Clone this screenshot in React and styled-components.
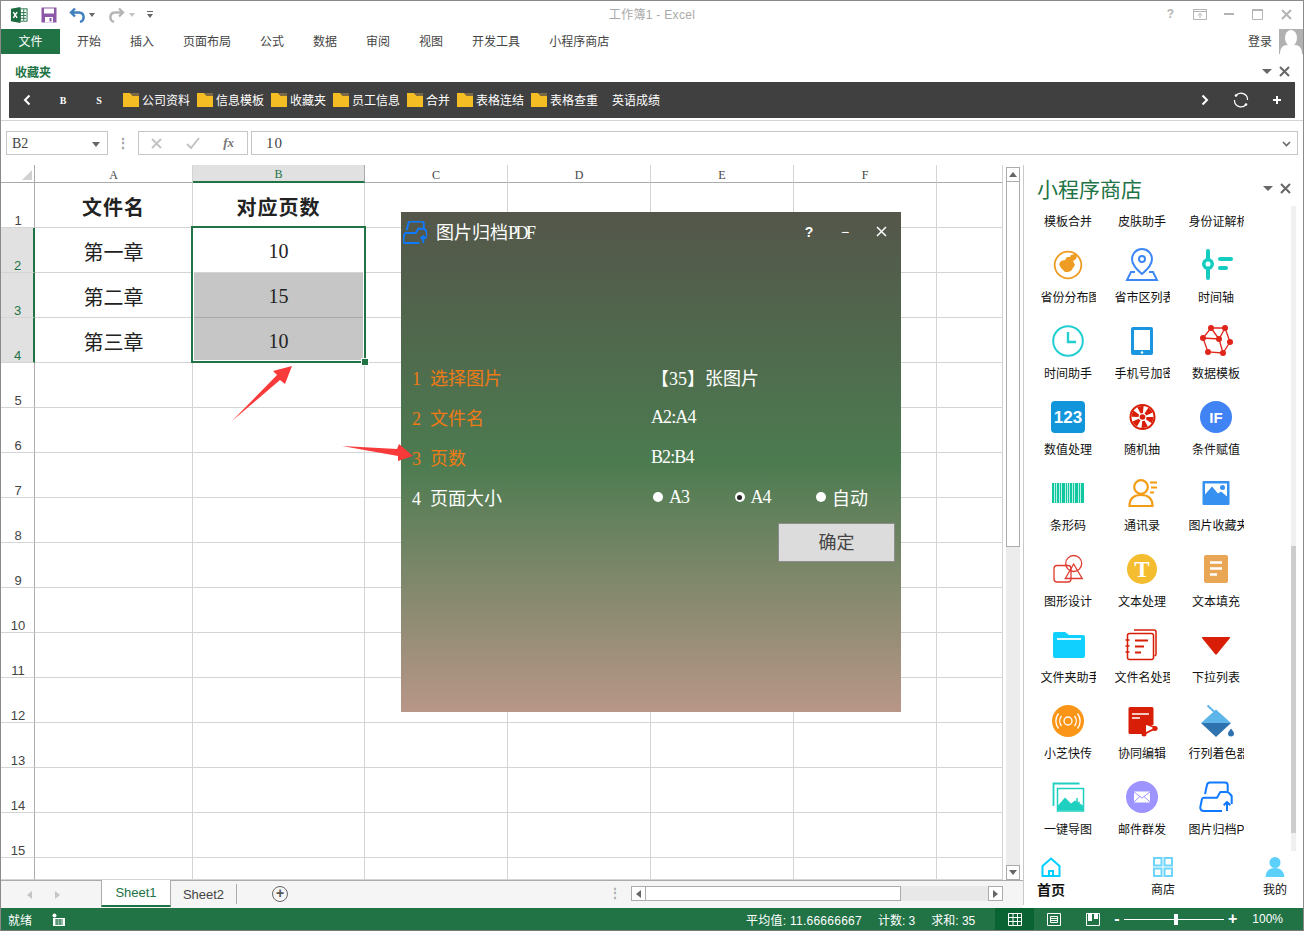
import React from 'react';
import styled, { createGlobalStyle } from 'styled-components';

const SANS = '"Liberation Sans", "Noto Sans CJK SC", sans-serif';
const SERIF = '"Liberation Serif", "Noto Sans CJK SC", serif';
const GREEN = '#217346';

const GlobalStyle = createGlobalStyle`
  html, body { margin: 0; padding: 0; background: #fff; }
  * { box-sizing: border-box; }
`;

const Window = styled.div`
  width: 1304px;
  height: 931px;
  display: flex;
  flex-direction: column;
  overflow: hidden;
  border: 1px solid #8a8a8a;
  border-bottom-color: #7a7a7a;
  font-family: ${SANS};
  font-size: 12px;
  color: #444;
  background: #fff;
`;

/* title bar */
const TitleBar = styled.div`
  height: 28px;
  display: grid;
  grid-template-columns: 1fr auto 1fr;
  align-items: center;
`;
const QuickAccess = styled.div`
  display: flex;
  align-items: center;
  padding: 0 0 1px 9px;
`;
const TitleText = styled.div`
  color: #a9a9a9;
  font-size: 12px;
  letter-spacing: 0.3px;
  padding-bottom: 3px;
`;
const WindowButtons = styled.div`
  display: flex;
  justify-content: flex-end;
  padding: 0 2px 2px 0;
`;
const WindowButton = styled.div`
  width: 29px;
  height: 20px;
  display: flex;
  align-items: center;
  justify-content: center;
  color: #b4b4b4;
  font-weight: bold;
`;

/* ribbon tabs */
const RibbonTabs = styled.div`
  height: 25px;
  display: flex;
  align-items: center;
`;
const FileTab = styled.div`
  width: 59px;
  height: 25px;
  padding-bottom: 2px;
  background: ${GREEN};
  color: #fff;
  display: flex;
  align-items: center;
  justify-content: center;
  margin-right: 17px;
`;
const TabList = styled.div`
  display: flex;
  gap: 29px;
  flex: 1;
  padding-bottom: 3px;
`;
const LoginArea = styled.div`
  display: flex;
  align-items: center;
  gap: 7px;
`;
const LoginText = styled.span`
  padding-bottom: 3px;
`;
const Avatar = styled.div`
  width: 24px;
  height: 25px;
  background: #b1b1b1;
  overflow: hidden;
`;

/* favourites group */
const FavGroup = styled.div`
  height: 67px;
  border-bottom: 1px solid #d4d4d4;
  padding: 0 8px;
`;
const FavHeader = styled.div`
  height: 28px;
  padding: 6px 0 0 6px;
  display: flex;
  align-items: center;
  color: ${GREEN};
  font-weight: bold;
`;
const HeaderTools = styled.div`
  margin-left: auto;
  display: flex;
  align-items: center;
  gap: 7px;
  padding-right: ${p => p.$pad}px;
`;
const DownTriangle = styled.span`
  width: 0;
  height: 0;
  border-left: 5px solid transparent;
  border-right: 5px solid transparent;
  border-top: 5px solid #666;
`;
const FolderBar = styled.div`
  height: 36px;
  background: #404040;
  color: #fff;
  display: flex;
  align-items: center;
`;
const BarButton = styled.div`
  width: 36px;
  height: 36px;
  display: flex;
  align-items: center;
  justify-content: center;
  flex: none;
  font-family: ${SERIF};
  font-size: 10px;
  font-weight: bold;
`;
const BarSpacer = styled.div`
  flex: 1;
`;
const FolderItem = styled.div`
  display: flex;
  align-items: center;
  gap: 3px;
  padding-bottom: 1px;
  margin-left: ${p => p.$gap}px;
`;

/* formula bar */
const FormulaRow = styled.div`
  height: 44px;
  padding: 10px 5px 10px 5px;
  display: flex;
  align-items: stretch;
`;
const InputBox = styled.div`
  border: 1px solid #c6c6c6;
  display: flex;
  align-items: center;
  background: #fff;
`;
const NameBox = styled(InputBox)`
  width: 102px;
  padding: 2px 7px 0 5px;
  justify-content: space-between;
  font-family: ${SERIF};
  font-size: 14px;
  color: #444;
`;
const Grip = styled.div`
  width: 30px;
  display: flex;
  align-items: center;
  justify-content: center;
  color: #9a9a9a;
  font-weight: bold;
  font-size: 12px;
  line-height: 4px;
`;
const FxBox = styled(InputBox)`
  width: 110px;
  margin-right: 3px;
  padding: 0 13px 0 12px;
  justify-content: space-between;
`;
const FxLabel = styled.span`
  font-family: ${SERIF};
  font-style: italic;
  font-weight: bold;
  font-size: 13px;
  color: #777;
`;
const FormulaInput = styled(InputBox)`
  flex: 1;
  padding: 1px 6px 0 14px;
  justify-content: space-between;
  font-family: ${SERIF};
  font-size: 15px;
  letter-spacing: 1px;
  color: #444;
`;

/* main area */
const Main = styled.div`
  height: 743px;
  display: flex;
`;
const LeftColumn = styled.div`
  width: 1022px;
  display: flex;
  flex-direction: column;
`;
const SheetRow = styled.div`
  height: 715px;
  display: flex;
`;
const GridWrap = styled.div`
  position: relative;
  width: 1002px;
  height: 715px;
`;
const SheetGrid = styled.div`
  display: grid;
  grid-template-columns: 34px 158px 172px 143px 143px 143px 143px 66px;
  grid-template-rows: 18px repeat(15, 45px) 22px;
`;
const ColHead = styled.div`
  display: flex;
  align-items: center;
  justify-content: center;
  font-family: ${SERIF};
  font-size: 12px;
  padding-top: 3px;
  background: ${p => (p.$on ? '#e1e1e1' : '#fff')};
  color: ${p => (p.$on ? GREEN : '#444')};
  border-bottom: ${p => (p.$on ? `2px solid ${GREEN}` : '1px solid #ababab')};
  border-right: 1px solid ${p => (p.$on ? '#ababab' : '#d4d4d4')};
`;
const Corner = styled.div`
  border-right: 1px solid #ababab;
  border-bottom: 1px solid #ababab;
  display: flex;
  align-items: flex-end;
  justify-content: flex-end;
  padding: 0 2px 2px 0;
`;
const CornerMark = styled.div`
  width: 0;
  height: 0;
  border-left: 10px solid transparent;
  border-bottom: 10px solid #d2d2d2;
`;
const RowHead = styled.div`
  display: flex;
  align-items: flex-end;
  justify-content: center;
  line-height: 13px;
  padding-left: 1px;
  font-size: 13px;
  background: ${p => (p.$on ? '#e1e1e1' : '#fff')};
  color: ${p => (p.$on ? GREEN : '#444')};
  border-bottom: 1px solid #d4d4d4;
  border-right: ${p => (p.$on ? `2px solid ${GREEN}` : '1px solid #ababab')};
`;
const Cell = styled.div`
  display: flex;
  align-items: center;
  justify-content: center;
  padding-top: 2px;
  border-right: 1px solid #d4d4d4;
  border-bottom: 1px solid ${p => (p.$fill ? '#a9a9a9' : '#d4d4d4')};
  background: ${p => (p.$fill ? '#c6c6c6' : '#fff')};
  color: #222;
  font-family: ${SERIF};
  font-size: 20px;
  font-weight: ${p => (p.$bold ? 'bold' : 'normal')};
  letter-spacing: ${p => (p.$bold ? '1px' : '0')};
`;
const Selection = styled.div`
  position: absolute;
  left: 190px;
  top: 61px;
  width: 175px;
  height: 137px;
  border: 2px solid ${GREEN};
  box-shadow: inset 0 0 0 1px #fff;
`;
const FillHandle = styled.div`
  position: absolute;
  right: -4px;
  bottom: -4px;
  width: 6px;
  height: 6px;
  background: ${GREEN};
  outline: 1px solid #fff;
`;

const VScroll = styled.div`
  width: 20px;
  padding: 2px 3px 0 3px;
  display: flex;
  flex-direction: column;
`;
const ScrollButton = styled.div`
  flex: none;
  width: ${p => (p.$w ? `${p.$w}px` : '100%')};
  height: ${p => (p.$h ? `${p.$h}px` : '100%')};
  background: #fff;
  border: 1px solid #ababab;
  display: flex;
  align-items: center;
  justify-content: center;
`;
const VThumb = styled.div`
  height: 366px;
  background: #fff;
  border: 1px solid #ababab;
  margin-top: -1px;
`;
const VTrack = styled.div`
  flex: 1;
  background: #ececec;
`;
const Arrow = styled.span`
  width: 0;
  height: 0;
  ${p => p.$dir === 'up' && 'border-left:4px solid transparent;border-right:4px solid transparent;border-bottom:5px solid #666;'}
  ${p => p.$dir === 'down' && 'border-left:4px solid transparent;border-right:4px solid transparent;border-top:5px solid #666;'}
  ${p => p.$dir === 'left' && `border-top:4px solid transparent;border-bottom:4px solid transparent;border-right:5px solid ${p.$c || '#666'};`}
  ${p => p.$dir === 'right' && `border-top:4px solid transparent;border-bottom:4px solid transparent;border-left:5px solid ${p.$c || '#666'};`}
`;

/* sheet tabs */
const SheetTabs = styled.div`
  height: 28px;
  background: #f5f5f5;
  border-top: 1px solid #ababab;
  display: flex;
  align-items: stretch;
`;
const TabNav = styled.div`
  width: 100px;
  padding-left: 26px;
  display: flex;
  align-items: center;
  gap: 23px;
`;
const SheetTab = styled.div`
  width: ${p => p.$w}px;
  height: ${p => (p.$on ? '27px' : '26px')};
  margin-top: ${p => (p.$on ? '-1px' : '0')};
  display: flex;
  align-items: center;
  justify-content: center;
  font-size: 13px;
  color: ${p => (p.$on ? GREEN : '#444')};
  background: ${p => (p.$on ? '#fff' : 'transparent')};
  border-left: ${p => (p.$on ? '1px solid #ababab' : '0')};
  border-right: ${p => (p.$on ? '1px solid #ababab' : '0')};
  border-bottom: ${p => (p.$on ? `2px solid ${GREEN}` : '0')};
`;
const TabDivider = styled.div`
  width: 1px;
  height: 20px;
  margin-top: 3px;
  background: #ababab;
`;
const AddSheet = styled.div`
  width: 16px;
  height: 16px;
  margin: 5px 0 0 35px;
  border: 1px solid #666;
  border-radius: 50%;
  color: #555;
  font-size: 14px;
  font-weight: bold;
  line-height: 13px;
  text-align: center;
`;
const TabGrip = styled.div`
  margin-left: 321px;
  width: 22px;
  color: #aaa;
  font-weight: bold;
  line-height: 25px;
`;
const HScroll = styled.div`
  width: 372px;
  height: 15px;
  margin-top: 5px;
  background: #e8e8e8;
  display: flex;
`;
const HThumb = styled.div`
  width: 256px;
  height: 15px;
  margin-left: -1px;
  background: #fff;
  border: 1px solid #ababab;
`;
const HSpacer = styled.div`
  flex: 1;
`;

/* side panel */
const SidePanel = styled.aside`
  width: 280px;
  border-left: 1px solid #c9c9c9;
  display: flex;
  flex-direction: column;
  height: 740px;
`;
const PanelHead = styled.div`
  height: 41px;
  padding: 5px 9px 0 13px;
  display: flex;
  align-items: center;
  color: ${GREEN};
  font-size: 21px;
`;
const PanelBody = styled.div`
  height: 645px;
  display: flex;
`;
const AppGrid = styled.div`
  width: 267px;
  padding: 5px 0 0 7px;
  display: grid;
  grid-template-columns: repeat(3, 74px);
  grid-auto-rows: min-content;
  overflow: hidden;
`;
const AppCell = styled.div`
  height: ${p => (p.$flat ? '32px' : '76px')};
  display: flex;
  flex-direction: column;
  align-items: center;
`;
const AppIcon = styled.div`
  width: 44px;
  height: 44px;
  flex: none;
`;
const AppLabel = styled.div`
  width: 55px;
  height: 20px;
  line-height: 22px;
  text-align: center;
  white-space: nowrap;
  overflow: hidden;
  color: #111;
`;
const PanelTrack = styled.div`
  width: 5px;
  background: #f0f0f0;
  display: flex;
  flex-direction: column;
`;
const PanelThumb = styled.div`
  margin-top: 340px;
  height: 287px;
  background: #cdcdcd;
`;
const BottomNav = styled.nav`
  flex: 1;
  padding: 6px 14px 0 13px;
  display: flex;
  justify-content: space-between;
`;
const NavItem = styled.div`
  width: 28px;
  display: flex;
  flex-direction: column;
  align-items: center;
  gap: 3px;
  color: #111;
  font-size: ${p => (p.$on ? '14px' : '12px')};
  font-weight: ${p => (p.$on ? 'bold' : 'normal')};
  line-height: 20px;
  white-space: nowrap;
`;

/* status bar */
const StatusBar = styled.div`
  height: 22px;
  background: ${GREEN};
  color: #fff;
  display: flex;
  align-items: center;
  padding: 0 20px 0 7px;
`;
const StatusStats = styled.div`
  margin-left: auto;
  display: flex;
  gap: 16px;
  margin-right: 20px;
`;
const StatWide = styled.span`
  letter-spacing: 0.25px;
`;
const ViewButton = styled.div`
  width: 39px;
  height: 22px;
  display: flex;
  align-items: center;
  justify-content: center;
  background: ${p => (p.$on ? '#0a6332' : 'transparent')};
`;
const Zoomer = styled.div`
  margin-left: 2px;
  width: 127px;
  padding-right: 4px;
  display: flex;
  align-items: center;
  gap: 4px;
  font-size: 16px;
  font-weight: bold;
`;
const ZoomTrack = styled.div`
  position: relative;
  flex: 1;
  height: 1px;
  background: #fff;
`;
const ZoomKnob = styled.div`
  position: absolute;
  left: 50px;
  top: -5px;
  width: 4px;
  height: 11px;
  background: #fff;
`;
const ZoomValue = styled.div`
  margin-left: 11px;
`;

/* dialog and annotations */
const Dialog = styled.div`
  position: absolute;
  left: 400px;
  top: 47px;
  width: 500px;
  height: 500px;
  background: linear-gradient(180deg, #54564a 0%, #4c7b50 50%, #b89688 100%);
  font-family: ${SERIF};
  color: #fff;
  font-size: 18px;
`;
const DialogHead = styled.div`
  height: 40px;
  padding: 0 2px 0 2px;
  display: flex;
  align-items: center;
  gap: 9px;
  font-size: 18px;
`;
const DialogTitle = styled.span`
  padding-bottom: 3px;
`;
const Narrow = styled.span`
  letter-spacing: ${p => p.$ls}px;
`;
const DialogButtons = styled.div`
  margin-left: auto;
  display: flex;
  align-items: center;
  padding-bottom: 1px;
  font-family: ${SANS};
  font-size: 14px;
`;
const DialogButton = styled.div`
  width: 36px;
  display: flex;
  justify-content: center;
  font-weight: ${p => (p.$bold ? 'bold' : 'normal')};
`;
const DialogRows = styled.div`
  margin-top: 105px;
  padding-left: 11px;
  display: flex;
  flex-direction: column;
`;
const DialogRow = styled.div`
  height: 40px;
  display: flex;
  align-items: center;
`;
const RowLabel = styled.div`
  width: 239px;
  display: flex;
  align-items: baseline;
  gap: 9px;
  color: ${p => (p.$accent ? '#f07a14' : '#fff')};
`;
const RowValue = styled.div`
  font-size: 18px;
`;
const RadioGroup = styled.div`
  display: flex;
  margin-left: 2px;
`;
const RadioItem = styled.div`
  width: 81.5px;
  display: flex;
  align-items: center;
  gap: 6px;
  font-size: 18px;
`;
const RadioDot = styled.span`
  width: 10px;
  height: 10px;
  border-radius: 50%;
  background: #fff;
  display: flex;
  align-items: center;
  justify-content: center;
  &::after {
    content: '';
    width: 5px;
    height: 5px;
    border-radius: 50%;
    background: ${p => (p.$on ? '#222' : 'transparent')};
  }
`;
const ConfirmRow = styled.div`
  display: flex;
  justify-content: flex-end;
  padding: 6px 6px 0 0;
`;
const ConfirmButton = styled.div`
  width: 117px;
  height: 39px;
  padding-bottom: 3px;
  background: #dcdcdc;
  border: 1px solid #8d8d8d;
  color: #444;
  display: flex;
  align-items: center;
  justify-content: center;
  font-size: 18px;
`;
const Annotation = styled.svg`
  position: absolute;
  left: ${p => p.$x}px;
  top: ${p => p.$y}px;
`;

/* icons */
const ExcelLogo = () => (
  <svg width="18" height="18" viewBox="0 0 19 18">
    <rect x="7" y="2.500" width="11" height="13" fill="#fff" stroke="#217346" />
    <path d="M11 3v12M14.500 3v12M8 6.500h9M8 9.500h9M8 12.500h9" stroke="#217346" strokeWidth="1" />
    <path d="M1 2.500 11 .5v17L1 15.500z" fill="#1d6b41" />
    <path d="M3.500 6 7.500 12M7.500 6 3.500 12" stroke="#fff" strokeWidth="1.600" />
  </svg>
);
const SaveIcon = () => (
  <svg width="16" height="16" viewBox="0 0 16 16" style={{ marginLeft: 13 }}>
    <rect x=".5" y=".5" width="15" height="15" fill="#8c58a8" />
    <rect x="3" y="1.500" width="10" height="5" fill="#fff" />
    <rect x="4" y="10" width="8" height="5.500" fill="#fff" />
    <rect x="8.500" y="11" width="2" height="3.500" fill="#8c58a8" />
  </svg>
);
const TurnIcon = ({ color, flip, ml }) => (
  <svg width="17" height="16" viewBox="0 0 17 16" style={{ marginLeft: ml, transform: flip ? 'scaleX(-1)' : 'none' }}>
    <path d="M6 1.500 2 5.500l4 4M2.500 5.500H10c6 .5 6 8 1 9.500" fill="none" stroke={color} strokeWidth="2.400" />
  </svg>
);
const TinyDown = ({ color, ml }) => (
  <svg width="6" height="4" viewBox="0 0 6 4" style={{ marginLeft: ml }}>
    <path d="M0 0h6L3 4z" fill={color} />
  </svg>
);
const CustomizeMark = () => (
  <svg width="6" height="7" viewBox="0 0 6 7" style={{ marginLeft: 12 }}>
    <path d="M0 .5h6" stroke="#666" />
    <path d="M0 3h6L3 7z" fill="#666" />
  </svg>
);
const Cross = ({ size = 11, color = '#666', width = 2 }) => (
  <svg width={size} height={size} viewBox="0 0 11 11">
    <path d="M1 1l9 9M10 1l-9 9" stroke={color} strokeWidth={width} />
  </svg>
);
const FolderGlyph = () => (
  <svg width="16" height="14" viewBox="0 0 16 14">
    <path d="M0 0h7l3 3h6v11H0z" fill="#f4bd24" />
    <path d="M7 0h9v3h-6z" fill="#7b6a45" />
  </svg>
);
const Chevron = ({ dir }) => (
  <svg width="8" height="12" viewBox="0 0 8 12">
    <path d={dir === 'left' ? 'M6.500 1.500 2 6l4.500 4.500' : 'M1.500 1.500 6 6l-4.500 4.500'} fill="none" stroke="#fff" strokeWidth="2" />
  </svg>
);
const Refresh = () => (
  <svg width="16" height="16" viewBox="0 0 16 16">
    <path d="M3 3.500A6.500 6.500 0 0 1 14.500 8M13 12.500A6.500 6.500 0 0 1 1.500 8" fill="none" stroke="#fff" strokeWidth="1.200" />
    <circle cx="3" cy="3.500" r="1.300" fill="#fff" />
    <circle cx="13" cy="12.500" r="1.300" fill="#fff" />
  </svg>
);
const Plus = () => (
  <svg width="10" height="10" viewBox="0 0 10 10">
    <path d="M5 1v8M1 5h8" stroke="#fff" strokeWidth="2" />
  </svg>
);
const FolderUpload = ({ w = 44, h = 44, box = '0 0 44 44', sw = 2 }) => (
  <svg width={w} height={h} viewBox={box} fill="none" stroke="#0f7aff" strokeWidth={sw} strokeLinejoin="round">
    <path d="M11 19 13 10q.5-2.500 3-2.500h15q2.500 0 2.700 2.500v6.700" />
    <path d="M28 36H10q-4 0-3.700-4L8 24q.5-1.300 2-1.300h13L26.300 17H32q3 0 4 2l1.700 2v8" />
    <path d="M33 36v-9M29.700 30.300 33 27l3.300 3.300" />
  </svg>
);

const BARS = [[0, 2], [3, 1], [5, 2], [8, 1], [10, 3], [14, 1], [16, 1], [18, 2], [21, 1], [23, 3], [27, 1], [29, 3]];

const ICONS = {
  province: (
    <>
      <circle cx="22" cy="22" r="13.300" fill="none" stroke="#ee9c24" strokeWidth="1.800" />
      <path d="M13 21l2-3 4-1 2-3h3l1-2 4-1 2 2-1 3-3 2 1 2 1 2-2 3-2 3-3 1h-3l-2-2-2-2z" fill="#ee9c24" />
    </>
  ),
  pin: (
    <g fill="none" stroke="#3d86f5" strokeWidth="2">
      <path d="M22 31C16 26 12 21 12 16a10 10 0 0 1 20 0c0 5-4 10-10 15z" />
      <circle cx="22" cy="16" r="3" />
      <path d="M15 29h-4L7 37h30l-4-8h-4" />
    </g>
  ),
  timeline: (
    <g fill="#14cdc0">
      <rect x="12" y="6" width="4" height="31" rx="2" />
      <circle cx="14" cy="21" r="6" />
      <circle cx="14" cy="21" r="2.500" fill="#fff" />
      <rect x="24" y="14" width="15" height="4" rx="2" />
      <rect x="24" y="23" width="10" height="4" rx="2" />
    </g>
  ),
  clock: (
    <g fill="none" stroke="#22cfd0">
      <circle cx="22" cy="22" r="14.800" strokeWidth="2" />
      <path d="M22 13v10h8" strokeWidth="2.400" />
    </g>
  ),
  tablet: (
    <>
      <rect x="11" y="8" width="22" height="28" rx="2" fill="#1a96e0" />
      <rect x="14" y="11" width="16" height="20" fill="#fff" />
      <circle cx="22" cy="33.500" r="1.300" fill="#fff" />
    </>
  ),
  network: (
    <>
      <path d="M17 9h14l5 14-7 11-15-1-5-14zM9 19l16 1 6-11M25 20l4 14M17 9l8 11" fill="none" stroke="#e0261a" strokeWidth="1.300" />
      {[[17, 9], [31, 9], [9, 19], [25, 20], [36, 23], [14, 33], [29, 34]].map(([x, y]) => (
        <circle key={`${x}-${y}`} cx={x} cy={y} r="3" fill="#e0261a" />
      ))}
    </>
  ),
  num: (
    <>
      <rect x="5" y="6" width="34" height="32" rx="4" fill="#1296db" />
      <text x="22" y="28" textAnchor="middle" fontFamily={SANS} fontSize="17" fontWeight="bold" fill="#fff">123</text>
    </>
  ),
  wheel: (
    <>
      <circle cx="22.500" cy="22" r="12" fill="none" stroke="#d81e06" strokeWidth="2" />
      <circle cx="22.500" cy="22" r="7.500" fill="none" stroke="#d81e06" strokeWidth="7" strokeDasharray="4.500 3.350" />
      <circle cx="22.500" cy="22" r="2.800" fill="#d81e06" />
    </>
  ),
  cond: (
    <>
      <circle cx="22" cy="22" r="16" fill="#3f83f5" />
      <text x="22" y="27.500" textAnchor="middle" fontFamily={SANS} fontSize="15" fontWeight="bold" fill="#fff">IF</text>
    </>
  ),
  barcode: (
    <>
      <rect x="6" y="12" width="32" height="20" fill="#bdf0e4" />
      {BARS.map(([x, w]) => (
        <rect key={x} x={6 + x} y="12" width={w} height="20" fill="#10c8a0" />
      ))}
    </>
  ),
  contact: (
    <g fill="none" stroke="#f39c12" strokeWidth="2.200">
      <circle cx="21" cy="16" r="6.800" />
      <path d="M9.500 35c0-7 4-11 11.500-11s11.500 4 11.500 11z" />
      <path d="M30 11.500h7M31 16.500h6M30 21.500h4" strokeWidth="1.800" />
    </g>
  ),
  photo: (
    <>
      <rect x="8.500" y="10" width="27" height="24" rx="1" fill="#3590f0" />
      <path d="M11 12.500h22v13l-6-5-3 2-6-7-7 8z" fill="#fff" />
      <circle cx="28.500" cy="16.500" r="2.500" fill="#3590f0" />
    </>
  ),
  shapes: (
    <g fill="none" stroke="#e03a2e" strokeWidth="1.300">
      <circle cx="27.700" cy="16.500" r="8" />
      <rect x="8" y="18.500" width="17" height="16.500" rx="3" />
      <path d="M27.700 17l8.500 14.500H19.300z" />
    </g>
  ),
  textT: (
    <>
      <circle cx="22" cy="22" r="15" fill="#f4bd2f" />
      <text x="22" y="30" textAnchor="middle" fontFamily={SERIF} fontSize="23" fontWeight="bold" fill="#fff">T</text>
    </>
  ),
  fill: (
    <>
      <rect x="10" y="8" width="24" height="28" rx="2" fill="#e8a656" />
      <path d="M16 15.500h12M16 21.500h12M16 27.500h7" stroke="#fff" strokeWidth="2.600" />
    </>
  ),
  folder: (
    <>
      <path d="M7 11q0-2 2-2h10l4 3h14q2 0 2 2v19q0 2-2 2H9q-2 0-2-2z" fill="#0fd0ff" />
      <path d="M11 16h24" stroke="#fff" strokeWidth="1.800" />
    </>
  ),
  names: (
    <g fill="none" stroke="#d81e06" strokeWidth="1.500">
      <rect x="7.500" y="10.500" width="26" height="26" rx="2" />
      <path d="M14 7h20q2 0 2 2v22q0 1.500-1.500 2" />
      <path d="M15 17.500h13M15 23.500h9M15 29.500h6" strokeWidth="2" />
      <path d="M5.500 17h4M5.500 23h4M5.500 29h4" strokeWidth="1.500" />
    </g>
  ),
  dropdown: <path d="M8.500 14h27q1 0 .5 1L23 31q-1 1-2 0L8 15q-.5-1 .5-1z" fill="#d81e06" />,
  wave: (
    <>
      <circle cx="22" cy="22" r="16" fill="#fa9517" />
      <g fill="none" stroke="#fff" strokeWidth="1.300">
        <circle cx="22" cy="22" r="4" />
        <path d="M15.500 27a8 8 0 0 1 0-10M28.500 17a8 8 0 0 1 0 10M12.500 29.500a12 12 0 0 1 0-15M31.500 14.500a12 12 0 0 1 0 15" />
      </g>
    </>
  ),
  collab: (
    <>
      <path d="M10 8h22q1.500 0 1.500 1.500V26H26v9H10q-1.500 0-1.500-1.500v-24Q8.500 8 10 8z" fill="#d81e06" />
      <path d="M12 15h17M12 19h8" stroke="#fff" strokeWidth="1.600" />
      <path d="M24 24l12 5-12 6z" fill="none" stroke="#d81e06" strokeWidth="1.800" />
      <circle cx="24" cy="25" r="2.500" fill="#d81e06" />
      <circle cx="24" cy="35" r="2.500" fill="#d81e06" />
      <circle cx="35" cy="29.500" r="2.500" fill="#d81e06" />
    </>
  ),
  bucket: (
    <>
      <path d="M13.500 6.500 20.500 13" stroke="#5db5ea" strokeWidth="2" />
      <path d="M22 10.500 37 24H7z" fill="#5db5ea" />
      <path d="M7 24h30L22 38z" fill="#2f72b0" />
      <path d="M37 29.500c2 2.500 3 3.500 3 5a3 3 0 0 1-6 0c0-1.500 1-2.500 3-5z" fill="#2f72b0" />
    </>
  ),
  gallery: (
    <>
      <path d="M33.500 8.500H7.500V31" fill="none" stroke="#1fd0c0" strokeWidth="1.800" />
      <rect x="11.500" y="13.500" width="26" height="22.500" fill="#fff" stroke="#1fd0c0" strokeWidth="1.500" />
      <path d="M12 35.500v-5l7-8 6 6 4-3 8 5v5z" fill="#1fd0c0" />
      <path d="M31 23v6M28.500 27l2.500 2.500 2.500-2.500" fill="none" stroke="#1fd0c0" strokeWidth="1.500" />
    </>
  ),
  mail: (
    <>
      <circle cx="22" cy="22" r="16" fill="#9d94ff" />
      <rect x="14" y="16.500" width="16" height="11" fill="#fff" />
      <path d="M14 17l8 6 8-6M14 27l6-5.500M30 27l-6-5.500" fill="none" stroke="#9d94ff" strokeWidth="1" />
    </>
  ),
};

const APPS = [
  { name: '模板合并' }, { name: '皮肤助手' }, { name: '身份证解析' },
  { name: '省份分布图', icon: 'province' }, { name: '省市区列表', icon: 'pin' }, { name: '时间轴', icon: 'timeline' },
  { name: '时间助手', icon: 'clock' }, { name: '手机号加密', icon: 'tablet' }, { name: '数据模板', icon: 'network' },
  { name: '数值处理', icon: 'num' }, { name: '随机抽', icon: 'wheel' }, { name: '条件赋值', icon: 'cond' },
  { name: '条形码', icon: 'barcode' }, { name: '通讯录', icon: 'contact' }, { name: '图片收藏夹', icon: 'photo' },
  { name: '图形设计', icon: 'shapes' }, { name: '文本处理', icon: 'textT' }, { name: '文本填充', icon: 'fill' },
  { name: '文件夹助手', icon: 'folder' }, { name: '文件名处理', icon: 'names' }, { name: '下拉列表', icon: 'dropdown' },
  { name: '小芝快传', icon: 'wave' }, { name: '协同编辑', icon: 'collab' }, { name: '行列着色器', icon: 'bucket' },
  { name: '一键导图', icon: 'gallery' }, { name: '邮件群发', icon: 'mail' }, { name: '图片归档PDF', icon: 'upload' },
];

const COLS = ['A', 'B', 'C', 'D', 'E', 'F', ''];
const ROWS = Array.from({ length: 16 }, (_, i) => i + 1);
const CELLS = {
  A1: ['文件名', true], B1: ['对应页数', true],
  A2: ['第一章'], B2: ['10'],
  A3: ['第二章'], B3: ['15'],
  A4: ['第三章'], B4: ['10'],
};
const TABS = ['开始', '插入', '页面布局', '公式', '数据', '审阅', '视图', '开发工具', '小程序商店'];
const FOLDERS = ['公司资料', '信息模板', '收藏夹', '员工信息', '合并', '表格连结', '表格查重'];

const Sheet = () => (
  <SheetGrid>
    <Corner><CornerMark /></Corner>
    {COLS.map(c => <ColHead key={c || 'G'} $on={c === 'B'}>{c}</ColHead>)}
    {ROWS.map(r => (
      <React.Fragment key={r}>
        <RowHead $on={r >= 2 && r <= 4}>{r < 16 ? r : ''}</RowHead>
        {COLS.map(c => {
          const data = CELLS[`${c}${r}`] || [];
          return (
            <Cell key={c} $bold={data[1]} $fill={c === 'B' && (r === 3 || r === 4)}>
              {data[0]}
            </Cell>
          );
        })}
      </React.Fragment>
    ))}
  </SheetGrid>
);

const PageDialog = () => (
  <Dialog>
    <DialogHead>
      <FolderUpload w={24} h={23} box="6 7 32 30" sw={2.600} />
      <DialogTitle>图片归档<Narrow $ls={-2.5}>PDF</Narrow></DialogTitle>
      <DialogButtons>
        <DialogButton $bold>?</DialogButton>
        <DialogButton>−</DialogButton>
        <DialogButton><Cross size={11} color="#fff" width={1.500} /></DialogButton>
      </DialogButtons>
    </DialogHead>
    <DialogRows>
      <DialogRow>
        <RowLabel $accent><span>1</span><span>选择图片</span></RowLabel>
        <RowValue>【35】张图片</RowValue>
      </DialogRow>
      <DialogRow>
        <RowLabel $accent><span>2</span><span>文件名</span></RowLabel>
        <RowValue><Narrow $ls={-0.9}>A2:A4</Narrow></RowValue>
      </DialogRow>
      <DialogRow>
        <RowLabel $accent><span>3</span><span>页数</span></RowLabel>
        <RowValue><Narrow $ls={-0.9}>B2:B4</Narrow></RowValue>
      </DialogRow>
      <DialogRow>
        <RowLabel><span>4</span><span>页面大小</span></RowLabel>
        <RadioGroup>
          <RadioItem><RadioDot /><Narrow $ls={-1}>A3</Narrow></RadioItem>
          <RadioItem><RadioDot $on /><Narrow $ls={-1}>A4</Narrow></RadioItem>
          <RadioItem><RadioDot />自动</RadioItem>
        </RadioGroup>
      </DialogRow>
    </DialogRows>
    <ConfirmRow><ConfirmButton>确定</ConfirmButton></ConfirmRow>
  </Dialog>
);

const App = () => (
  <Window>
    <GlobalStyle />
    <TitleBar>
      <QuickAccess>
        <ExcelLogo />
        <SaveIcon />
        <TurnIcon color="#3f7fbd" ml={12} />
        <TinyDown color="#666" ml={3} />
        <TurnIcon color="#b5b5b5" flip ml={13} />
        <TinyDown color="#c4c4c4" ml={4} />
        <CustomizeMark />
      </QuickAccess>
      <TitleText>工作簿1 - Excel</TitleText>
      <WindowButtons>
        <WindowButton>?</WindowButton>
        <WindowButton>
          <svg width="14" height="11" viewBox="0 0 14 11">
            <path d="M.5.500h13v10H.5zM.5 2.500h13M7 9V4.500M5 6.500l2-2 2 2" fill="none" stroke="#b4b4b4" />
          </svg>
        </WindowButton>
        <WindowButton>
          <svg width="10" height="2" viewBox="0 0 10 2"><path d="M0 1h10" stroke="#b4b4b4" strokeWidth="2" /></svg>
        </WindowButton>
        <WindowButton>
          <svg width="11" height="11" viewBox="0 0 11 11">
            <path d="M.5 1.500h10v9H.5z" fill="none" stroke="#b4b4b4" /><path d="M0 1h11" stroke="#b4b4b4" strokeWidth="2" />
          </svg>
        </WindowButton>
        <WindowButton><Cross color="#b4b4b4" /></WindowButton>
      </WindowButtons>
    </TitleBar>

    <RibbonTabs>
      <FileTab>文件</FileTab>
      <TabList>{TABS.map(t => <span key={t}>{t}</span>)}</TabList>
      <LoginArea>
        <LoginText>登录</LoginText>
        <Avatar>
          <svg width="24" height="25" viewBox="0 0 24 25">
            <ellipse cx="12" cy="9" rx="6" ry="8" fill="#fff" />
            <path d="M1 25c0-6 3-9 7-9h8c4 0 7 3 7 9z" fill="#fff" />
          </svg>
        </Avatar>
      </LoginArea>
    </RibbonTabs>

    <FavGroup>
      <FavHeader>
        收藏夹
        <HeaderTools $pad={5}><DownTriangle /><Cross /></HeaderTools>
      </FavHeader>
      <FolderBar>
        <BarButton><Chevron dir="left" /></BarButton>
        <BarButton>B</BarButton>
        <BarButton>S</BarButton>
        {FOLDERS.map((f, i) => (
          <FolderItem key={f} $gap={i === 0 ? 6 : 7}>
            <FolderGlyph />
            <span>{f}</span>
          </FolderItem>
        ))}
        <FolderItem $gap={14}>英语成绩</FolderItem>
        <BarSpacer />
        <BarButton><Chevron dir="right" /></BarButton>
        <BarButton><Refresh /></BarButton>
        <BarButton><Plus /></BarButton>
      </FolderBar>
    </FavGroup>

    <FormulaRow>
      <NameBox>B2<Arrow $dir="down" /></NameBox>
      <Grip>⋮</Grip>
      <FxBox>
        <Cross size={11} color="#c4c4c4" />
        <svg width="14" height="12" viewBox="0 0 14 12">
          <path d="M1 7l4 4 8-10" fill="none" stroke="#c4c4c4" strokeWidth="2" />
        </svg>
        <FxLabel>fx</FxLabel>
      </FxBox>
      <FormulaInput>
        10
        <svg width="9" height="6" viewBox="0 0 9 6">
          <path d="M1 1l3.500 3.500L8 1" fill="none" stroke="#666" strokeWidth="1.600" />
        </svg>
      </FormulaInput>
    </FormulaRow>

    <Main>
      <LeftColumn>
        <SheetRow>
          <GridWrap>
            <Sheet />
            <Selection><FillHandle /></Selection>
            <PageDialog />
            <Annotation $x={230} $y={200} width="64" height="58" viewBox="0 0 64 58">
              <path d="M1 56 49 15l5 4 7-18-19 5 4 4z" fill="#f93a3a" />
            </Annotation>
            <Annotation $x={340} $y={276} width="76" height="22" viewBox="0 0 76 22">
              <path d="M1 5 56 8 58 3l14 12-15 5 0-5z" fill="#f93a3a" />
            </Annotation>
          </GridWrap>
          <VScroll>
            <ScrollButton $h={15}><Arrow $dir="up" /></ScrollButton>
            <VThumb />
            <VTrack />
            <ScrollButton $h={15}><Arrow $dir="down" /></ScrollButton>
          </VScroll>
        </SheetRow>
        <SheetTabs>
          <TabNav>
            <Arrow $dir="left" $c="#c4c4c4" />
            <Arrow $dir="right" $c="#c4c4c4" />
          </TabNav>
          <SheetTab $w={70} $on>Sheet1</SheetTab>
          <SheetTab $w={65}>Sheet2</SheetTab>
          <TabDivider />
          <AddSheet>+</AddSheet>
          <TabGrip>⋮</TabGrip>
          <HScroll>
            <ScrollButton $w={15} $h={15}><Arrow $dir="left" /></ScrollButton>
            <HThumb />
            <HSpacer />
            <ScrollButton $w={15} $h={15}><Arrow $dir="right" /></ScrollButton>
          </HScroll>
        </SheetTabs>
      </LeftColumn>

      <SidePanel>
        <PanelHead>
          小程序商店
          <HeaderTools $pad={3}><DownTriangle /><Cross /></HeaderTools>
        </PanelHead>
        <PanelBody>
          <AppGrid>
            {APPS.map(app => (
              <AppCell key={app.name} $flat={!app.icon}>
                {app.icon && (
                  <AppIcon>
                    {app.icon === 'upload' ? <FolderUpload /> : <svg width="44" height="44" viewBox="0 0 44 44">{ICONS[app.icon]}</svg>}
                  </AppIcon>
                )}
                <AppLabel>{app.name}</AppLabel>
              </AppCell>
            ))}
          </AppGrid>
          <PanelTrack><PanelThumb /></PanelTrack>
        </PanelBody>
        <BottomNav>
          <NavItem $on>
            <svg width="20" height="20" viewBox="0 0 20 20">
              <path d="M1.500 9 10 1.500 18.500 9v10h-17zM8 19v-5h4v5" fill="none" stroke="#00d0ff" strokeWidth="2" />
            </svg>
            首页
          </NavItem>
          <NavItem>
            <svg width="20" height="20" viewBox="0 0 20 20" fill="none" stroke="#6dd5fa" strokeWidth="2">
              <rect x="1" y="1" width="7.500" height="7.500" /><rect x="11.500" y="1" width="7.500" height="7.500" />
              <rect x="1" y="11.500" width="7.500" height="7.500" /><rect x="11.500" y="11.500" width="7.500" height="7.500" />
            </svg>
            商店
          </NavItem>
          <NavItem>
            <svg width="20" height="20" viewBox="0 0 20 20" fill="#5bd0fb">
              <circle cx="10" cy="5.500" r="5.500" />
              <path d="M.5 20Q1.500 11 10 11t9.500 9z" />
            </svg>
            我的
          </NavItem>
        </BottomNav>
      </SidePanel>
    </Main>

    <StatusBar>
      <span>就绪</span>
      <svg width="14" height="13" viewBox="0 0 14 13" style={{ marginLeft: 20 }}>
        <circle cx="2.500" cy="2.500" r="2" fill="#fff" />
        <rect x="1" y="5" width="12" height="8" fill="#fff" />
        <path d="M3 7h8M3 9h8M3 11h8M5 6v6M8 6v6" stroke="#217346" />
      </svg>
      <StatusStats>
        <StatWide>平均值: 11.66666667</StatWide>
        <span>计数: 3</span>
        <span>求和: 35</span>
      </StatusStats>
      <ViewButton $on>
        <svg width="14" height="13" viewBox="0 0 14 13">
          <path d="M.5.500h13v12H.5zM5 .5v12M9.500.5v12M.5 4.500h13M.5 8.500h13" fill="none" stroke="#fff" />
        </svg>
      </ViewButton>
      <ViewButton>
        <svg width="14" height="13" viewBox="0 0 14 13">
          <path d="M.5.500h13v12H.5zM3.500 3.500h7v6h-7zM3.500 5.500h7M3.500 7.500h7" fill="none" stroke="#fff" />
        </svg>
      </ViewButton>
      <ViewButton>
        <svg width="14" height="13" viewBox="0 0 14 13">
          <path d="M.5.500h13v12H.5z" fill="none" stroke="#fff" />
          <path d="M2 1h4v7H2zM8 1h4v5H8z" fill="#fff" />
        </svg>
      </ViewButton>
      <Zoomer>
        <span>-</span>
        <ZoomTrack><ZoomKnob /></ZoomTrack>
        <span>+</span>
      </Zoomer>
      <ZoomValue>100%</ZoomValue>
    </StatusBar>
  </Window>
);

export default App;
